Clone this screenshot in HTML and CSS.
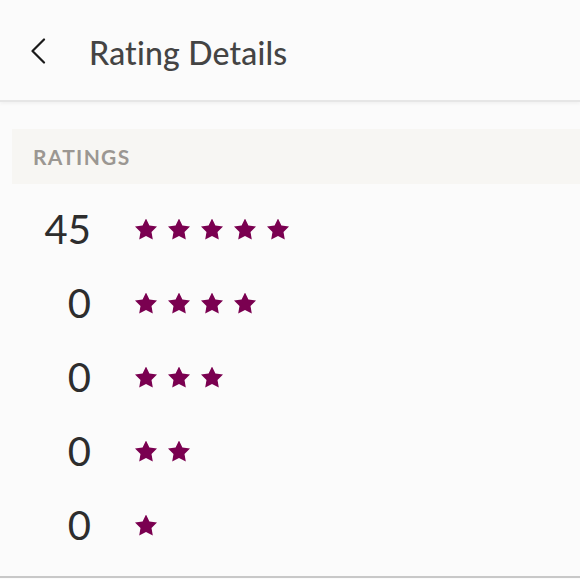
FILE: index.html
```html
<!DOCTYPE html>
<html>
<head>
<meta charset="utf-8">
<link rel="stylesheet" href="styles.css">
</head>
<body>
<header class="topbar">
  <svg class="back" width="16" height="26" viewBox="0 0 16 26"><path d="M14 1.5 L2.5 13 L14 24.5" fill="none" stroke="#1a1a1a" stroke-width="2.2" stroke-linecap="round" stroke-linejoin="round"/></svg>
  <h1 class="title">Rating Details</h1>
</header>
<section class="section">
  <div class="section-head">RATINGS</div>
  <div class="rows">
    <div class="row"><span class="count">45</span><span class="stars"><i class="star"></i><i class="star"></i><i class="star"></i><i class="star"></i><i class="star"></i></span></div>
    <div class="row"><span class="count">0</span><span class="stars"><i class="star"></i><i class="star"></i><i class="star"></i><i class="star"></i></span></div>
    <div class="row"><span class="count">0</span><span class="stars"><i class="star"></i><i class="star"></i><i class="star"></i></span></div>
    <div class="row"><span class="count">0</span><span class="stars"><i class="star"></i><i class="star"></i></span></div>
    <div class="row"><span class="count">0</span><span class="stars"><i class="star"></i></span></div>
  </div>
</section>
<div class="bottom-line"></div>
</body>
</html>
```
FILE: styles.css
```css
html, body {
  margin: 0;
  padding: 0;
  background: #fbfbfb;
  font-family: Lato, "Noto Sans", sans-serif;
}
.topbar {
  height: 100px;
  display: flex;
  align-items: center;
  border-bottom: 2px solid #e6e6e6;
  box-shadow: 0 2px 3px rgba(0,0,0,0.04);
}
.back {
  margin-left: 30px;
  margin-top: 2px;
}
.title {
  margin: 0 0 0 43px;
  font-size: 32px;
  font-weight: 500;
  color: #444444;
  padding-top: 4px;
  letter-spacing: 0.2px;
}
.section {
  margin-top: 27px;
}
.section-head {
  margin-left: 12px;
  height: 55px;
  background: #f7f6f3;
  display: flex;
  align-items: center;
  padding-left: 21px;
  font-size: 21px;
  font-weight: 700;
  letter-spacing: 1.3px;
  color: #9b9792;
}
.rows {
  padding-top: 8px;
}
.row {
  height: 74px;
  display: flex;
  align-items: center;
}
.count {
  width: 91px;
  text-align: right;
  font-size: 40px;
  font-weight: 400;
  color: #2d2d2d;
  line-height: 1;
}
.stars {
  margin-left: 44px;
  display: flex;
  gap: 11px;
}
.star {
  width: 22px;
  height: 21px;
  background: #7a0050;
  clip-path: polygon(50% 0%, 65.5% 33%, 100% 38%, 75% 63.8%, 80.9% 100%, 50% 83%, 19.1% 100%, 25% 63.8%, 0% 38%, 34.5% 33%);
}
.bottom-line {
  margin-top: 14px;
  height: 2px;
  background: #c8c8c8;
}
```
